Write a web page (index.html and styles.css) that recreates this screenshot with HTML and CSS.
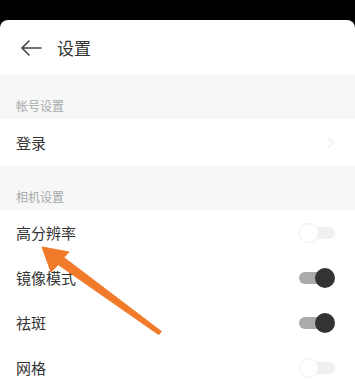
FILE: index.html
```html
<!DOCTYPE html>
<html>
<head>
  <meta charset="UTF-8">
  <link rel="stylesheet" href="styles.css">
</head>
<body>
  <div class="screen">
    <div class="panel">
      <div class="header">
        <svg class="back" width="22" height="16" viewBox="0 0 22 16">
          <path d="M21 8H2M9 1L2 8l7 7" fill="none" stroke="#444" stroke-width="1.6" stroke-linecap="round" stroke-linejoin="round"/>
        </svg>
        <h2>设置</h2>
      </div>

      <div class="section">帐号设置</div>
      <div class="row row-login">
        <span>登录</span>
        <svg class="chevron" width="8" height="12" viewBox="0 0 8 12">
          <path d="M1 1l5 5-5 5" fill="none" stroke="#eee" stroke-width="1.5"/>
        </svg>
      </div>

      <div class="section">相机设置</div>
      <div class="row"><span>高分辨率</span><span class="toggle"></span></div>
      <div class="row"><span>镜像模式</span><span class="toggle on"></span></div>
      <div class="row"><span>祛斑</span><span class="toggle on"></span></div>
      <div class="row"><span>网格</span><span class="toggle"></span></div>
    </div>

    <svg class="pointer" width="355" height="390" viewBox="0 0 355 390">
      <path d="M42 247 L69 252 L63.8 257.4 L161.4 331.4 L158.6 334.6 L58.2 264.6 L51 272 Z" fill="#f27b2b" stroke="#f27b2b" stroke-width="1" stroke-linejoin="round"/>
    </svg>
  </div>
</body>
</html>
```

FILE: styles.css
```css
body {
  margin: 0;
  font-family: "Noto Sans CJK SC", "Noto Sans", sans-serif;
  background: #000;
}
.screen {
  position: relative;
  width: 355px;
  height: 390px;
  overflow: hidden;
  padding-top: 20px;
  box-sizing: border-box;
}
.panel {
  background: white;
  border-radius: 8px 8px 0 0;
  height: 370px;
}
.header {
  display: flex;
  align-items: center;
  height: 55px;
  padding-left: 20px;
}
.header h2 {
  margin: 0 0 0 15px;
  font-size: 17px;
  font-weight: 400;
  color: #333;
}
.section {
  display: flex;
  align-items: flex-end;
  height: 44px;
  padding: 0 16px 5px;
  box-sizing: border-box;
  background: #f6f8f8;
  font-size: 12px;
  color: #a8a8a8;
}
.row {
  display: flex;
  align-items: center;
  justify-content: space-between;
  height: 45px;
  padding: 0 20px 0 16px;
  font-size: 15px;
  color: #333;
}
.row-login {
  height: 47px;
}
.toggle {
  position: relative;
  width: 36px;
  height: 20px;
}
.toggle::before {
  content: "";
  position: absolute;
  left: 6px;
  right: 0;
  top: 4px;
  height: 12px;
  border-radius: 6px;
  background: #f0f0f0;
}
.toggle::after {
  content: "";
  position: absolute;
  left: 0;
  top: 0;
  width: 18px;
  height: 18px;
  border-radius: 50%;
  background: white;
  border: 1px solid #eee;
}
.toggle.on::before {
  left: 0;
  right: 6px;
  background: #aaa;
}
.toggle.on::after {
  left: auto;
  right: 0;
  width: 20px;
  height: 20px;
  border: none;
  background: #333;
}
.pointer {
  position: absolute;
  left: 0;
  top: 0;
}
```
